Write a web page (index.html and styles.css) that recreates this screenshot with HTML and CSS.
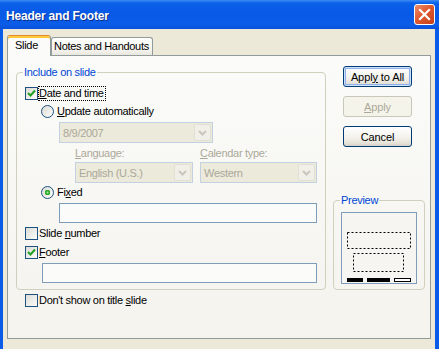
FILE: index.html
```html
<!DOCTYPE html>
<html lang="en">
<head>
    <meta charset="UTF-8">
    <meta name="viewport" content="width=device-width, initial-scale=1.0">
    <title>Header and Footer</title>
    <link rel="stylesheet" href="styles.css">
</head>
<body>
    <div class="window">
        <div class="titlebar">
            <span class="title">Header and Footer</span>
            <span class="close">
                <svg width="19" height="19" viewBox="0 0 19 19"><path d="M5 5 L14 14 M14 5 L5 14" stroke="#fff" stroke-width="2.2" stroke-linecap="square"/></svg>
            </span>
        </div>

        <div class="client">
            <div class="tabs">
                <div class="tab active">Slide</div>
                <div class="tab">Notes and Handouts</div>
            </div>

            <div class="panel">
                <div class="left">
                    <fieldset class="group include">
                        <legend>Include on slide</legend>

                        <div class="row">
                            <span class="check"><svg width="11" height="11" viewBox="0 0 11 11"><path d="M2 5 L4.5 7.5 L9 2.5" fill="none" stroke="#21a121" stroke-width="2"/></svg></span>
                            <span class="label focus"><u>D</u>ate and time</span>
                        </div>
                        <div class="row sub">
                            <span class="radio"></span>
                            <span class="label"><u>U</u>pdate automatically</span>
                        </div>
                        <div class="combo date">
                            <span>8/9/2007</span>
                            <span class="drop"><svg width="15" height="15" viewBox="0 0 15 15"><path d="M4 6 L7.5 9.5 L11 6" fill="none" stroke="#c9c7ba" stroke-width="2"/></svg></span>
                        </div>
                        <div class="pair labels">
                            <span><u>L</u>anguage:</span>
                            <span><u>C</u>alendar type:</span>
                        </div>
                        <div class="pair combos">
                            <div class="combo">
                                <span>English (U.S.)</span>
                                <span class="drop"><svg width="15" height="15" viewBox="0 0 15 15"><path d="M4 6 L7.5 9.5 L11 6" fill="none" stroke="#c9c7ba" stroke-width="2"/></svg></span>
                            </div>
                            <div class="combo">
                                <span>Western</span>
                                <span class="drop"><svg width="15" height="15" viewBox="0 0 15 15"><path d="M4 6 L7.5 9.5 L11 6" fill="none" stroke="#c9c7ba" stroke-width="2"/></svg></span>
                            </div>
                        </div>
                        <div class="row sub">
                            <span class="radio on"></span>
                            <span class="label">Fi<u>x</u>ed</span>
                        </div>
                        <div class="field fixed"></div>
                        <div class="row">
                            <span class="check"></span>
                            <span class="label">Slide <u>n</u>umber</span>
                        </div>
                        <div class="row">
                            <span class="check"><svg width="11" height="11" viewBox="0 0 11 11"><path d="M2 5 L4.5 7.5 L9 2.5" fill="none" stroke="#21a121" stroke-width="2"/></svg></span>
                            <span class="label"><u>F</u>ooter</span>
                        </div>
                        <div class="field footer"></div>
                    </fieldset>

                    <div class="row outside">
                        <span class="check"></span>
                        <span class="label">Don't show on title <u>s</u>lide</span>
                    </div>
                </div>

                <div class="right">
                    <div class="btn default"><span>Appl<u>y</u>&nbsp;to All</span></div>
                    <div class="btn disabled"><span><u>A</u>pply</span></div>
                    <div class="btn"><span>Cancel</span></div>

                    <fieldset class="group preview">
                        <legend>Preview</legend>
                        <svg class="page" width="76" height="72" viewBox="0 0 76 72">
                            <rect x="0.5" y="0.5" width="75" height="71" fill="#f6f5f1" stroke="#7f9db9"/>
                            <rect x="6.5" y="20.5" width="63" height="16" fill="none" stroke="#000" stroke-dasharray="2 2"/>
                            <rect x="12.5" y="41.5" width="50" height="18" fill="none" stroke="#000" stroke-dasharray="2 2"/>
                            <rect x="6" y="66" width="16" height="4" fill="#000"/>
                            <rect x="26" y="66" width="23" height="4" fill="#000"/>
                            <rect x="53.5" y="66.5" width="16" height="3" fill="#fff" stroke="#000"/>
                        </svg>
                    </fieldset>
                </div>
            </div>
        </div>
    </div>
</body>
</html>
```

FILE: styles.css
```css
* {
    box-sizing: border-box;
}
body {
    margin: 0;
    font-family: 'Liberation Sans', Arial, sans-serif;
    font-size: 11px;
    letter-spacing: -0.3px;
    color: #000;
}
.window {
    width: 439px;
    height: 349px;
    background: #0b5be9;
    display: flex;
    flex-direction: column;
    overflow: hidden;
}
.titlebar {
    height: 29px;
    flex: none;
    display: flex;
    align-items: center;
    justify-content: space-between;
    padding: 0 4px 0 6px;
    background: linear-gradient(#3d8cf3 0, #0b60e9 3px, #0859e6 50%, #0b5de8 85%, #0a50da 100%);
}
.title {
    color: #fff;
    font-weight: bold;
    font-size: 12px;
    letter-spacing: -0.2px;
    padding-top: 2px;
    text-shadow: 1px 1px #0a2e8c;
}
.close {
    width: 21px;
    height: 21px;
    border: 1px solid #fff;
    border-radius: 3px;
    background: linear-gradient(135deg, #ec8e6c, #e05a30 45%, #c43f17);
    display: flex;
    align-items: center;
    justify-content: center;
}
.client {
    flex: 1;
    background: #ece9d8;
    margin: 0 4px 0 3px;
    padding-top: 6px;
}
.tabs {
    display: flex;
    align-items: flex-start;
    height: 21px;
    margin: 0 0 -1px 4px;
    position: relative;
    z-index: 1;
}
.tab {
    height: 18px;
    margin-top: 2px;
    padding: 1px 3px 0 2px;
    line-height: 14px;
    border: 1px solid #919b9c;
    border-bottom: none;
    border-radius: 3px 3px 0 0;
    background: linear-gradient(#fffffe, #f4f3ee 70%, #e9e7dd);
    white-space: nowrap;
}
.tab.active {
    height: 21px;
    width: 44px;
    margin-top: 0;
    padding: 2px 0 0 7px;
    border-top: 1px solid #e68b2c;
    box-shadow: inset 0 2px #ffc73c;
    background: #fbfbf9;
}
.panel {
    margin-left: 4px;
    width: 424px;
    height: 284px;
    border: 1px solid #919b9c;
    background: linear-gradient(#fbfbf9, #f4f3ee);
    display: flex;
    gap: 7px;
    padding: 10px 5px 0 8px;
}
.left {
    width: 310px;
}
.right {
    width: 92px;
    display: flex;
    flex-direction: column;
}
.group {
    margin: 0;
    min-width: 0;
    border: 1px solid #d0d0bf;
    border-radius: 4px;
}
.group legend {
    color: #0046d5;
    line-height: 13px;
    padding: 0 1px;
    margin-left: -2px;
}
.include {
    padding: 6px 8px 6px 8px;
}
.row {
    display: flex;
    align-items: center;
    height: 17px;
    margin-top: 2px;
}
.include > .row:first-of-type {
    margin-top: 0;
}
.row.sub {
    margin-left: 16px;
    margin-top: 1px;
}
.row.outside {
    margin-left: 9px;
}
.check {
    width: 13px;
    height: 13px;
    flex: none;
    border: 1px solid #1c5180;
    background: linear-gradient(135deg, #dcdcd7, #fbfbf8);
    display: flex;
    align-items: center;
    justify-content: center;
}
.radio {
    width: 13px;
    height: 13px;
    flex: none;
    margin-right: 2px;
    border: 1px solid #1c5180;
    border-radius: 50%;
    background: linear-gradient(135deg, #dcdcd7, #fbfbf8);
}
.radio.on {
    background: radial-gradient(circle at 50% 50%, #a8e49c 0, #3cb43c 1.5px, #21a121 2.6px, transparent 3px), linear-gradient(135deg, #dcdcd7, #fbfbf8);
}
.label {
    border: 1px dotted transparent;
    padding-right: 1px;
    line-height: 13px;
    white-space: nowrap;
}
.label.focus {
    border-color: #000;
}
.combo {
    display: flex;
    align-items: center;
    height: 21px;
    border: 1px solid #c2d0e2;
    background: #ebeadb;
    color: #aca899;
    padding-left: 3px;
}
.combo .drop {
    margin-left: auto;
    margin-right: 1px;
    width: 17px;
    height: 17px;
    border: 1px solid #e2e0d4;
    border-radius: 2px;
    background: #f1f0e8;
    display: flex;
    align-items: center;
    justify-content: center;
}
.combo.date {
    margin: 2px 0 0 34px;
    width: 154px;
}
.pair {
    display: grid;
    grid-template-columns: 118px 117px;
    column-gap: 7px;
    margin-left: 50px;
}
.labels {
    height: 14px;
    line-height: 14px;
    margin-top: 3px;
    color: #aca899;
}
.combos {
    margin-top: 2px;
}
.field {
    height: 20px;
    margin-top: 2px;
    border: 1px solid #7f9db9;
    background: #fbfbf9;
}
.field.fixed {
    margin-left: 34px;
    width: 258px;
}
.field.footer {
    margin-left: 17px;
    width: 275px;
}
.btn {
    width: 69px;
    height: 21px;
    margin-left: 10px;
    margin-bottom: 9px;
    border: 1px solid #003c74;
    border-radius: 3px;
    background: linear-gradient(#fff, #f3f2ec 55%, #e5e2d8 85%, #d6d0c5);
    display: flex;
    align-items: center;
    justify-content: center;
    letter-spacing: -0.1px;
}
.btn.default {
    box-shadow: inset 0 0 0 1px #cde2fb, inset 0 0 0 2px #8fb0ea;
}
.btn.disabled {
    border-color: #c9c7ba;
    background: #f5f4ea;
    color: #aca899;
}
.preview {
    margin-top: 38px;
    padding: 5px 7px;
}
.preview legend {
    margin-left: -1px;
}
.page {
    display: block;
}
```
